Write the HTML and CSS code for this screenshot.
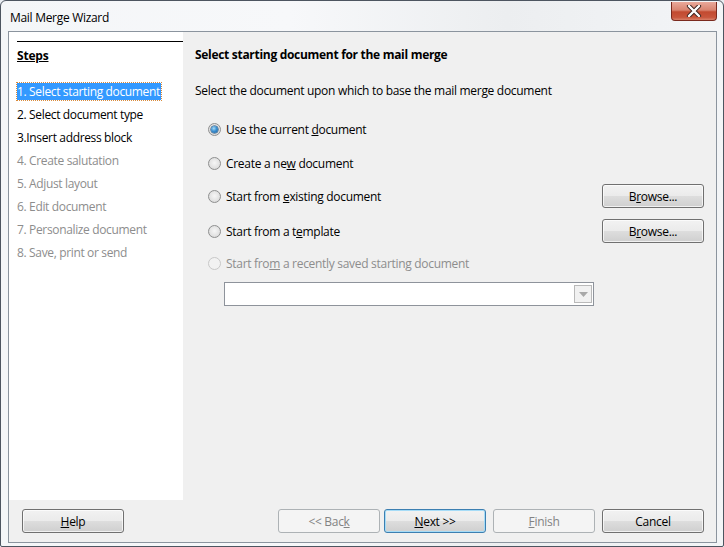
FILE: index.html
```html
<!DOCTYPE html>
<html>
<head>
<meta charset="utf-8">
<link rel="stylesheet" href="styles.css">
</head>
<body>
<div class="window">
  <div class="titlebar">
    <span class="title">Mail Merge Wizard</span>
    <div class="close-btn">
      <svg width="20" height="12" viewBox="0 0 20 12">
        <path d="M5 1 L15 11 M15 1 L5 11" stroke="#3a2420" stroke-width="4.2" stroke-linecap="round"/>
        <path d="M5 1 L15 11 M15 1 L5 11" stroke="#ffffff" stroke-width="2.4" stroke-linecap="round"/>
      </svg>
    </div>
  </div>
  <div class="client">
    <div class="main">
      <div class="steps">
        <div class="steps-rule"></div>
        <div class="steps-head">Steps</div>
        <div class="step-list">
          <div class="step active">1. Select starting document</div>
          <div class="step">2. Select document type</div>
          <div class="step">3.Insert address block</div>
          <div class="step disabled">4. Create salutation</div>
          <div class="step disabled">5. Adjust layout</div>
          <div class="step disabled">6. Edit document</div>
          <div class="step disabled">7. Personalize document</div>
          <div class="step disabled">8. Save, print or send</div>
        </div>
      </div>
      <div class="page">
        <div class="page-title">Select starting document for the mail merge</div>
        <div class="page-desc">Select the document upon which to base the mail merge document</div>
        <div class="opt opt1">
          <span class="radio checked"></span>
          <span class="opt-label">Use the current <u>d</u>ocument</span>
        </div>
        <div class="opt opt2">
          <span class="radio"></span>
          <span class="opt-label">Create a ne<u>w</u> document</span>
        </div>
        <div class="opt opt3">
          <span class="radio"></span>
          <span class="opt-label">Start from <u>e</u>xisting document</span>
          <span class="btn browse">B<u>r</u>owse...</span>
        </div>
        <div class="opt opt4">
          <span class="radio"></span>
          <span class="opt-label">Start from a t<u>e</u>mplate</span>
          <span class="btn browse">B<u>r</u>owse...</span>
        </div>
        <div class="opt opt5 disabled">
          <span class="radio disabled"></span>
          <span class="opt-label">Start fro<u>m</u> a recently saved starting document</span>
        </div>
        <div class="combo">
          <div class="combo-field"></div>
          <div class="combo-btn">
            <svg width="9" height="5" viewBox="0 0 9 5"><path d="M0 0 H9 L4.5 5 Z" fill="#a8a8a8"/></svg>
          </div>
        </div>
      </div>
    </div>
    <div class="footer">
      <span class="btn fbtn"><u>H</u>elp</span>
      <span class="spacer"></span>
      <span class="btn fbtn disabled">&lt;&lt; Bac<u>k</u></span>
      <span class="btn fbtn focus"><u>N</u>ext &gt;&gt;</span>
      <span class="btn fbtn disabled gap8"><u>F</u>inish</span>
      <span class="btn fbtn gap8">Cancel</span>
    </div>
  </div>
</div>
</body>
</html>
```

FILE: styles.css
```css
html, body {
  margin: 0;
  padding: 0;
  width: 724px;
  height: 547px;
  overflow: hidden;
  background: #e9edf2;
}

body {
  font-family: "Open Sans", "Noto Sans", "Liberation Sans", sans-serif;
  font-size: 12px;
  color: #000;
}

.window {
  box-sizing: border-box;
  width: 724px;
  height: 547px;
  border: 1px solid #4d5560;
  border-radius: 6px 6px 2px 2px;
  background: linear-gradient(90deg, #f4f6f8 0%, #f7f8fa 40%, #eceef0 70%, #f3f5f7 100%);
  padding: 0 6px 0 7px;
  display: flex;
  flex-direction: column;
}

.titlebar {
  height: 30px;
  display: flex;
  align-items: flex-start;
  justify-content: space-between;
}

.title {
  margin-top: 8px;
  margin-left: 2px;
  font-size: 12px;
  letter-spacing: -0.3px;
  color: #000;
}

.close-btn {
  box-sizing: border-box;
  width: 46px;
  height: 19px;
  margin-top: 1px;
  border: 1px solid #7a2a1e;
  border-top: none;
  border-radius: 0 0 4px 4px;
  background: linear-gradient(180deg, #e9a99a 0%, #d98470 45%, #c24a30 55%, #c8563c 85%, #d8816a 100%);
  display: flex;
  align-items: center;
  justify-content: center;
}

.client {
  box-sizing: border-box;
  width: 709px;
  height: 512px;
  border: 1px solid #8b949e;
  background: #f0f0f0;
  display: flex;
  flex-direction: column;
}

.main {
  display: flex;
  height: 468px;
}

.steps {
  width: 174px;
  background: #ffffff;
  padding-left: 8px;
  box-sizing: border-box;
}

.steps-rule {
  margin-top: 9px;
  height: 1px;
  background: #000;
}

.steps-head {
  margin-top: 5px;
  font-weight: bold;
  text-decoration: underline;
  line-height: 17px;
  letter-spacing: -0.2px;
}

.step-list {
  margin-top: 19px;
  display: flex;
  flex-direction: column;
  gap: 6px;
}

.step {
  line-height: 17px;
  height: 17px;
  letter-spacing: -0.35px;
  align-self: flex-start;
  box-sizing: border-box;
}

.step.active {
  background: #3399ff;
  color: #fff;
  outline: 1px dotted #d98a3a;
  padding-right: 1px;
}

.step.disabled {
  color: #8d8d8d;
}

.page {
  flex: 1;
  padding: 0 12px 0 12px;
  display: flex;
  flex-direction: column;
}

.page-title {
  margin-top: 15px;
  font-weight: bold;
  line-height: 16px;
  letter-spacing: -0.3px;
}

.page-desc {
  margin-top: 20px;
  line-height: 16px;
  letter-spacing: -0.3px;
}

.opt {
  height: 24px;
  display: flex;
  align-items: center;
  padding-left: 13px;
  letter-spacing: -0.3px;
}

.opt1 { margin-top: 18px; }
.opt2 { margin-top: 10px; }
.opt3 { margin-top: 9px; }
.opt4 { margin-top: 11px; }
.opt5 { margin-top: 8px; }

.opt.disabled { color: #8d8d8d; }

.radio {
  box-sizing: border-box;
  width: 13px;
  height: 13px;
  border-radius: 50%;
  border: 1px solid #8e8f8f;
  background: radial-gradient(circle at 50% 45%, #f6f6f6 0%, #e2e2e2 60%, #cfcfcf 100%);
  margin-right: 5px;
  flex: none;
  position: relative;
}

.radio.checked::after {
  content: "";
  position: absolute;
  left: 2px;
  top: 2px;
  width: 7px;
  height: 7px;
  border-radius: 50%;
  background: radial-gradient(circle at 40% 35%, #a9dbf6 0%, #3b8fd0 45%, #1d5f9a 100%);
  box-shadow: 0 0 0 0.5px #163f66;
}

.radio.disabled {
  border-color: #c8c8c8;
  background: #f2f2f2;
}

.opt-label { flex: none; }

.btn {
  box-sizing: border-box;
  display: inline-flex;
  align-items: center;
  justify-content: center;
  width: 102px;
  height: 24px;
  border: 1px solid #707070;
  border-radius: 3px;
  background: linear-gradient(180deg, #f2f2f2 0%, #ebebeb 48%, #dddddd 52%, #cfcfcf 100%);
  box-shadow: inset 0 0 0 1px rgba(255, 255, 255, 0.7);
  letter-spacing: -0.3px;
  color: #000;
}

.browse {
  margin-left: auto;
}

.combo {
  margin-top: 7px;
  margin-left: 29px;
  width: 370px;
  height: 24px;
  box-sizing: border-box;
  border: 1px solid #8e939b;
  background: #fff;
  display: flex;
  align-items: center;
  justify-content: flex-end;
  padding-right: 1px;
}

.combo-field { flex: 1; }

.combo-btn {
  box-sizing: border-box;
  width: 18px;
  height: 18px;
  border: 1px solid #b9b9b9;
  background: #f1f1f1;
  display: flex;
  align-items: center;
  justify-content: center;
}

.footer {
  flex: 1;
  display: flex;
  align-items: flex-start;
  padding: 9px 12px 0 13px;
}

.spacer { flex: 1; }

.fbtn { margin-left: 4px; }
.fbtn:first-child { margin-left: 0; }
.fbtn.gap8 { margin-left: 7px; }

.btn.disabled {
  border-color: #adb2b5;
  background: #f4f4f4;
  box-shadow: none;
  color: #838383;
}

.btn.focus {
  border-color: #3c7fb1;
  box-shadow: inset 0 0 0 1px #a6dcf7;
  background: linear-gradient(180deg, #f2f2f2 0%, #ebebeb 48%, #dddddd 52%, #cfcfcf 100%);
}
```
